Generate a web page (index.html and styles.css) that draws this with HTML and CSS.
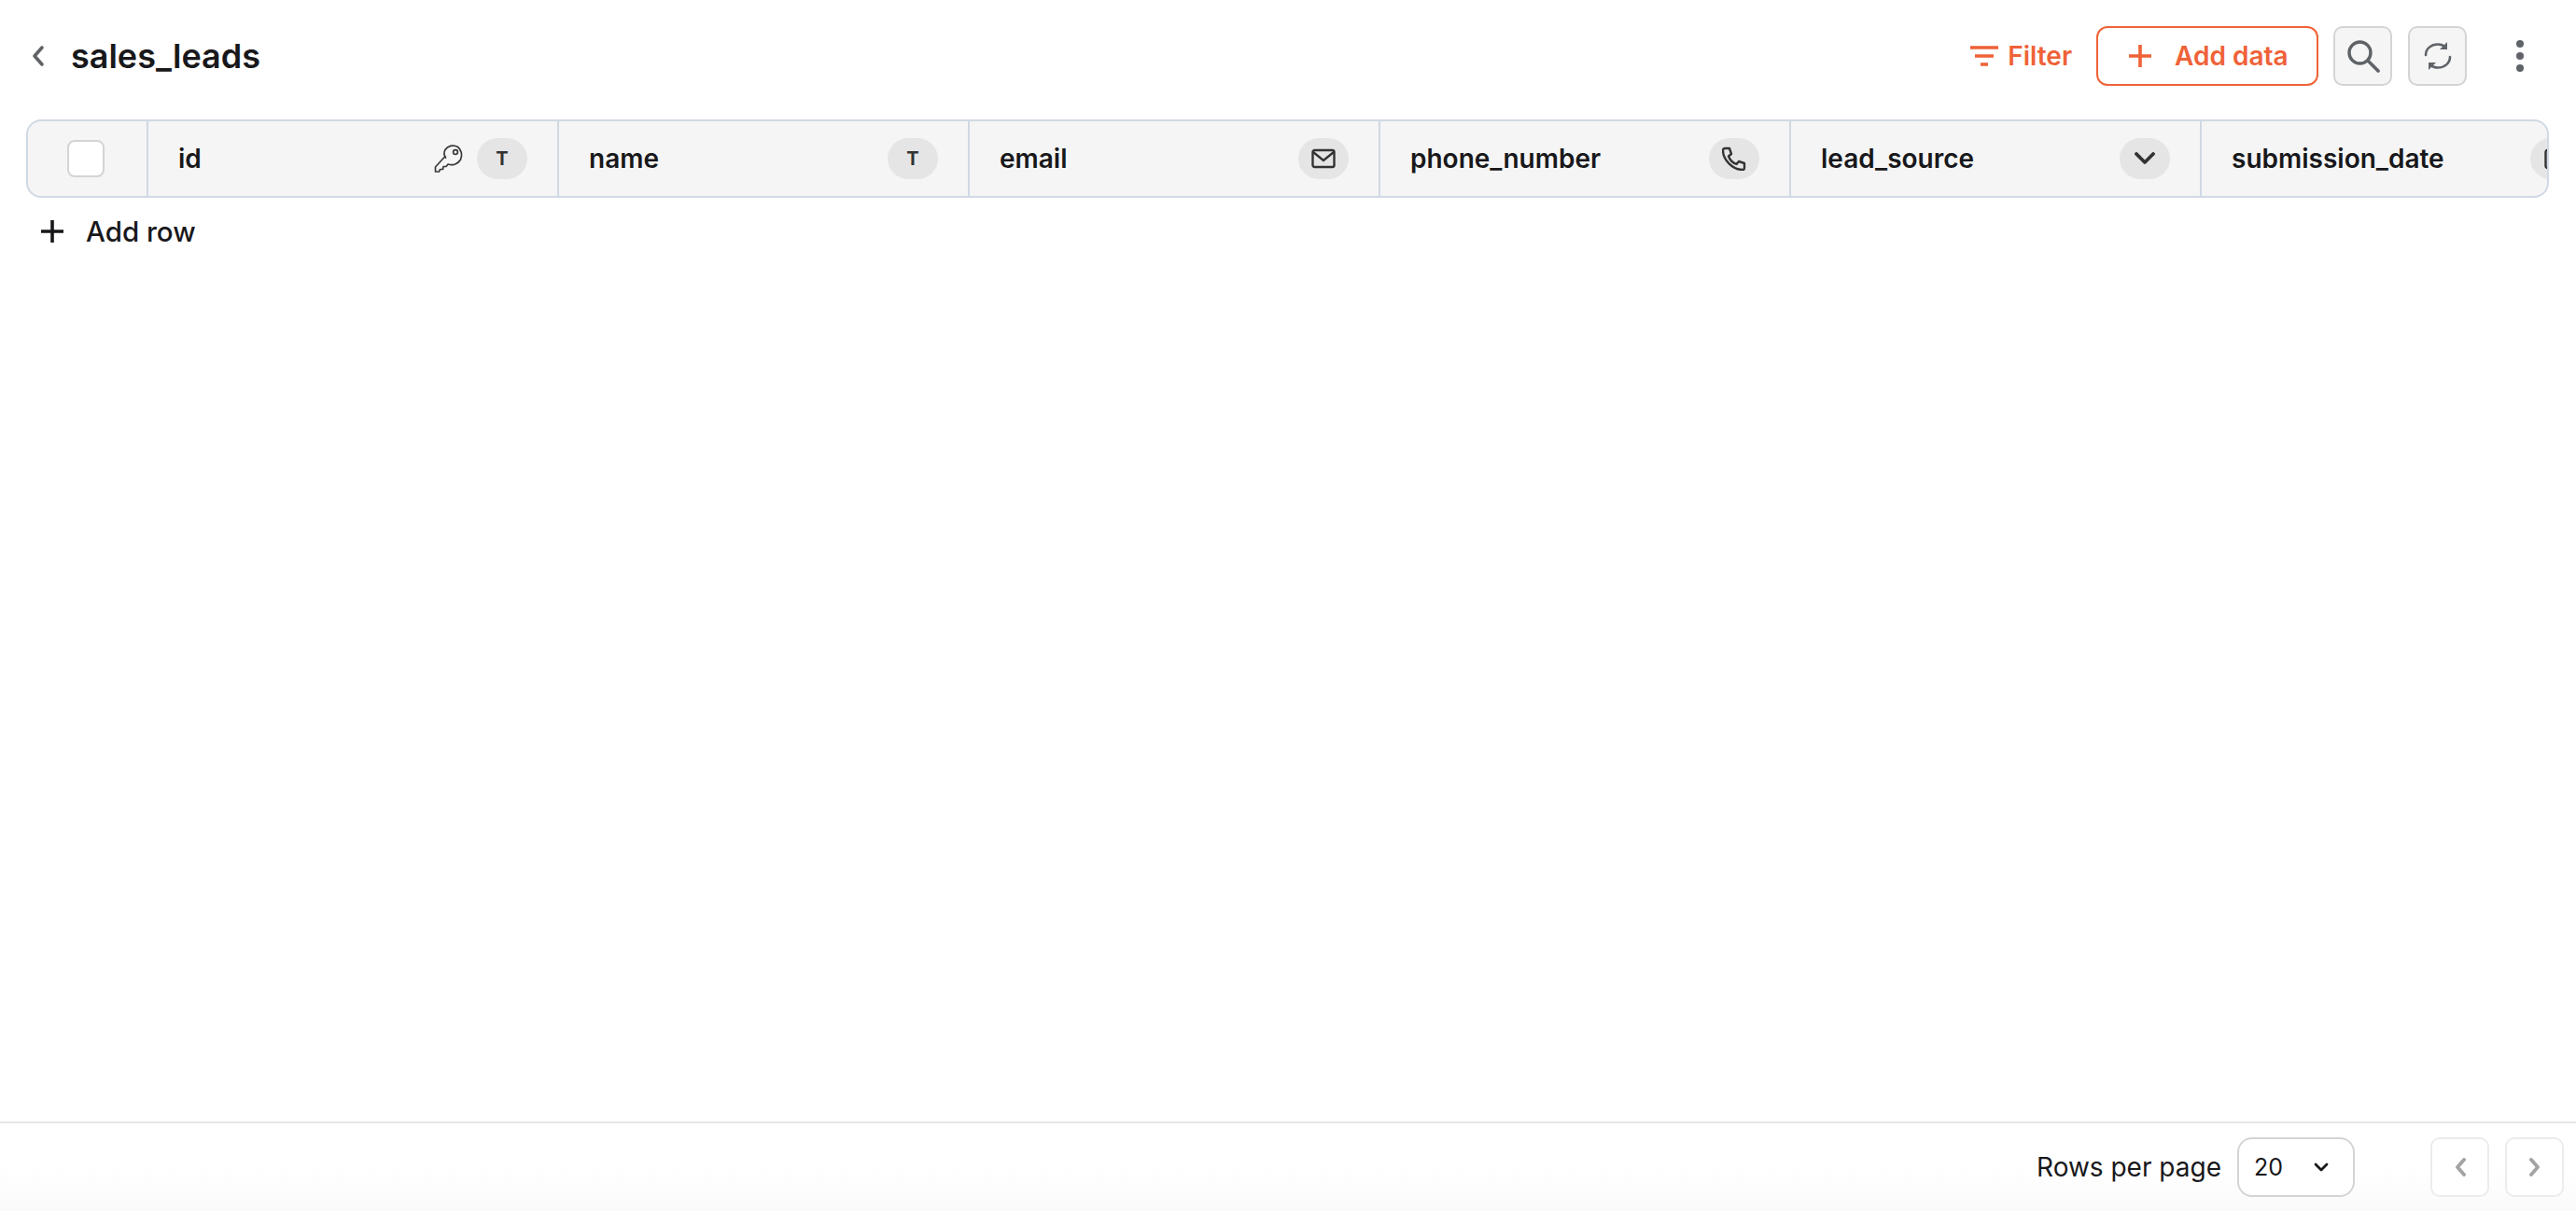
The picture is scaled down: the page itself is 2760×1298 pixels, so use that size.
FILE: index.html
```html
<!doctype html>
<html lang="en">
<head>
  <meta charset="UTF-8">
  <meta name="viewport" content="width=device-width, initial-scale=1.0">
  <title>sales_leads</title>
  <link rel="stylesheet" href="styles.css">
</head>
<body>
  <header class="topbar">
    <div class="title-group">
      <svg class="back" width="16" height="24" viewBox="0 0 16 24" fill="none"><path d="M12 3 4 12l8 9" stroke="#5f6368" stroke-width="3.600" stroke-linecap="round" stroke-linejoin="round"/></svg>
      <h1>sales_leads</h1>
    </div>
    <div class="actions">
      <button class="filter">
        <svg width="30" height="26" viewBox="0 0 30 26" fill="none"><path d="M0 4h30M5 13h20M11 22h8" stroke="#ef6238" stroke-width="3.400"/></svg>
        Filter
      </button>
      <button class="add-data">
        <svg width="24" height="24" viewBox="0 0 24 24" fill="none"><path d="M12 0v24M0 12h24" stroke="#ef6238" stroke-width="3.600"/></svg>
        Add data
      </button>
      <button class="icon-btn">
        <svg width="36" height="36" viewBox="0 0 36 36" fill="none"><circle cx="14.500" cy="14.500" r="11.500" stroke="#5f6368" stroke-width="3.400"/><path d="M23 23l11 11" stroke="#5f6368" stroke-width="3.600" stroke-linecap="round"/></svg>
      </button>
      <button class="icon-btn refresh">
        <svg width="30" height="32" viewBox="0 0 30 32" fill="none"><path d="M2 15C2 8 8 3.500 15 3.500c3 0 6 1 8 3M28 17c0 7-6 11.500-13 11.500-3 0-6-1-8-3" stroke="#5f6368" stroke-width="2.600" stroke-linecap="round"/><path d="M25 1v8h-8zM5 31v-8h8z" fill="#5f6368"/></svg>
      </button>
      <button class="more"><i></i><i></i><i></i></button>
    </div>
  </header>

  <div class="table">
    <div class="cell check"><span class="checkbox"></span></div>
    <div class="cell">
      <span class="col-name">id</span>
      <svg class="key" width="32" height="32" viewBox="0 0 32 32" fill="none"><path d="M12 13.500 1.500 25v5h4l1-2.500h3l.5-3h3l2-2.500c5 2 11-.500 13.500-5 2.500-5 .500-11-3-13.500-5-3-11-1-13.500 3-1.500 2.500-1.500 5.500 .500 8.500z" stroke="#3a3a3c" stroke-width="1.700" stroke-linejoin="round"/><circle cx="23" cy="9" r="2.400" stroke="#3a3a3c" stroke-width="1.700"/></svg>
      <span class="pill"><span class="t">T</span></span>
    </div>
    <div class="cell">
      <span class="col-name">name</span>
      <span class="pill"><span class="t">T</span></span>
    </div>
    <div class="cell">
      <span class="col-name">email</span>
      <span class="pill">
        <svg width="26" height="22" viewBox="0 0 26 22" fill="none"><rect x="1.500" y="2" width="23" height="18" rx="2" stroke="#333" stroke-width="2.400"/><path d="m2 4 11 9 11-9" stroke="#333" stroke-width="2.400"/></svg>
      </span>
    </div>
    <div class="cell">
      <span class="col-name">phone_number</span>
      <span class="pill">
        <svg width="26" height="26" viewBox="0 0 26 26" fill="none"><path d="M3 2h5l2 6-3 2.500c1.500 4 4.500 7 8.500 8.500l2.500-3 6 2v5c0 1-1 2-2 2C11.500 25 1 14.500 1 4c0-1 1-2 2-2z" stroke="#333" stroke-width="2.400" stroke-linejoin="round"/></svg>
      </span>
    </div>
    <div class="cell">
      <span class="col-name">lead_source</span>
      <span class="pill">
        <svg width="22" height="14" viewBox="0 0 22 14" fill="none"><path d="m2 2 9 9 9-9" stroke="#333" stroke-width="3.800" stroke-linecap="round" stroke-linejoin="round"/></svg>
      </span>
    </div>
    <div class="cell">
      <span class="col-name">submission_date</span>
      <span class="pill">
        <svg width="24" height="24" viewBox="0 0 24 24" fill="none"><rect x="1.500" y="3" width="21" height="19" rx="2" stroke="#333" stroke-width="2.400"/></svg>
      </span>
    </div>
  </div>

  <button class="add-row">
    <svg width="24" height="24" viewBox="0 0 24 24" fill="none"><path d="M12 0v24M0 12h24" stroke="#18181b" stroke-width="3.600"/></svg>
    Add row
  </button>

  <footer class="pager">
    <span class="rows-label">Rows per page</span>
    <div class="select">
      <span>20</span>
      <svg width="16" height="10" viewBox="0 0 16 10" fill="none"><path d="m2 2 6 6 6-6" stroke="#18181b" stroke-width="2.800" stroke-linecap="round" stroke-linejoin="round"/></svg>
    </div>
    <button class="page-btn prev">
      <svg width="12" height="20" viewBox="0 0 12 20" fill="none"><path d="M10 2 3 10l7 8" stroke="#a3a3a3" stroke-width="3.800" stroke-linecap="round" stroke-linejoin="round"/></svg>
    </button>
    <button class="page-btn">
      <svg width="12" height="20" viewBox="0 0 12 20" fill="none"><path d="m2 2 7 8-7 8" stroke="#a3a3a3" stroke-width="3.800" stroke-linecap="round" stroke-linejoin="round"/></svg>
    </button>
  </footer>
</body>
</html>
```

FILE: styles.css
```css
* {
  box-sizing: border-box;
}
body {
  display: flex;
  flex-direction: column;
  height: 100vh;
  margin: 0;
  overflow: hidden;
  background: #fff;
  color: #18181b;
  font-family: Inter, "Noto Sans", sans-serif;
}
button {
  font-family: inherit;
  background: none;
  border: none;
  padding: 0;
}
.topbar {
  display: flex;
  justify-content: space-between;
  align-items: center;
  height: 64px;
  margin-top: 28px;
  padding: 0 23px 0 33px;
}
.title-group {
  display: flex;
  align-items: center;
  gap: 27px;
}
h1 {
  margin: 0;
  font-size: 36px;
  font-weight: 600;
}
.actions {
  display: flex;
  align-items: center;
}
.filter {
  display: flex;
  align-items: center;
  gap: 10px;
  margin-right: 26px;
  color: #ef6238;
  font-size: 28px;
  font-weight: 600;
}
.add-data {
  display: flex;
  align-items: center;
  gap: 25px;
  width: 238px;
  height: 64px;
  padding-left: 33px;
  margin-right: 16px;
  border: 2px solid #ef6238;
  border-radius: 12px;
  color: #ef6238;
  font-size: 28px;
  font-weight: 600;
}
.icon-btn {
  display: flex;
  justify-content: center;
  align-items: center;
  width: 63px;
  height: 64px;
  margin-right: 17px;
  background: #f5f5f5;
  border: 2px solid #d4d4d4;
  border-radius: 10px;
}
.more {
  display: flex;
  flex-direction: column;
  align-items: center;
  gap: 5px;
  width: 20px;
  margin: 0 27px 0 30px;
}
.more i {
  width: 8px;
  height: 8px;
  border-radius: 50%;
  background: #5f6368;
}
.table {
  display: flex;
  height: 84px;
  margin: 36px 29px 0 28px;
  background: #f5f5f5;
  border: 2px solid #d0d9e4;
  border-radius: 16px;
  overflow: hidden;
}
.cell {
  display: flex;
  flex: 0 0 440px;
  align-items: center;
  gap: 14px;
  padding: 0 32px;
  border-right: 2px solid #d0d9e4;
}
.cell.check {
  flex: 0 0 129px;
  justify-content: center;
  padding: 0 4px 0 0;
}
.cell:last-child {
  padding-right: 34px;
  border-right: none;
}
.checkbox {
  width: 40px;
  height: 40px;
  background: #fff;
  border: 2px solid #d4d4d4;
  border-radius: 8px;
}
.col-name {
  flex: 1;
  font-size: 28px;
  font-weight: 600;
}
.key {
  flex: none;
}
.pill {
  display: flex;
  flex: none;
  justify-content: center;
  align-items: center;
  width: 54px;
  height: 44px;
  background: #e5e5e5;
  border-radius: 22px;
}
.t {
  font-size: 20px;
  font-weight: 700;
  color: #333;
}
.add-row {
  display: flex;
  align-items: center;
  gap: 24px;
  align-self: flex-start;
  margin: 18px 0 0 44px;
  color: #18181b;
  font-size: 29.5px;
  font-weight: 500;
}
.pager {
  display: flex;
  justify-content: flex-end;
  align-items: center;
  height: 96px;
  margin-top: auto;
  padding-right: 13px;
  border-top: 2px solid #e5e5e5;
  background: linear-gradient(#fff 50%, #fafafa);
}
.rows-label {
  margin-right: 17px;
  font-size: 28px;
}
.select {
  display: flex;
  justify-content: space-between;
  align-items: center;
  width: 126px;
  height: 64px;
  padding: 0 26px 0 16px;
  margin-right: 81px;
  background: #fff;
  border: 2px solid #d4d4d4;
  border-radius: 16px;
  font-size: 25px;
}
.page-btn {
  display: flex;
  justify-content: center;
  align-items: center;
  width: 63px;
  height: 64px;
  background: #fff;
  border: 2px solid #ececec;
  border-radius: 10px;
}
.page-btn.prev {
  margin-right: 17px;
}
```
